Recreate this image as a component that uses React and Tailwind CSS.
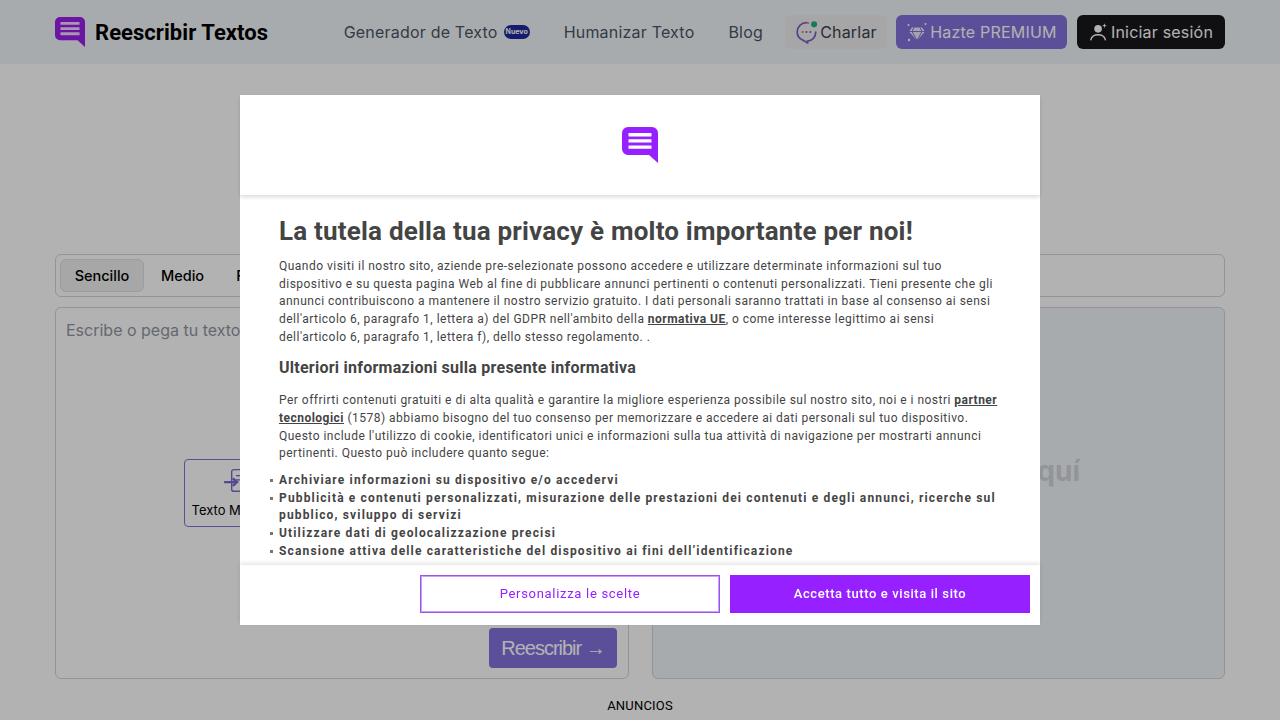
const Logo = ({ className, fill, bar }) => (
  <svg viewBox="0 0 36 36" className={className}>
    <path d="M6 0H30A6 6 0 0 1 36 6V36L27 28H6A6 6 0 0 1 0 22V6A6 6 0 0 1 6 0Z" fill={fill} />
    <rect x="6.5" y="6" width="23" height="3.4" rx="0.6" fill={bar} />
    <rect x="6.5" y="12.2" width="23" height="3.4" rx="0.6" fill={bar} />
    <rect x="6.5" y="18.4" width="23" height="3.4" rx="0.6" fill={bar} />
  </svg>
);

const ChatIcon = () => (
  <svg viewBox="0 0 22 22" className="w-[24px] h-[24px]">
    <path d="M10.5 2.5a8.5 8.5 0 0 0-8.5 8.5c0 3.6 2.2 6.2 5 7.4l4.5 2.6v-1.6c4.6-.4 7.5-4 7.5-8.4" fill="none" stroke="#7a5fc4" strokeWidth="1.6" strokeLinecap="round" />
    <path d="M10.5 2.5c.8 0 1.6.1 2.3.3" fill="none" stroke="#e56fb0" strokeWidth="1.6" />
    <circle cx="7" cy="11" r="1" fill="#e0609f" />
    <circle cx="10.5" cy="11" r="1" fill="#7a5fc4" />
    <circle cx="14" cy="11" r="1" fill="#7a5fc4" />
    <circle cx="17.5" cy="4" r="2.8" fill="#1fae8e" />
  </svg>
);

const DiamondIcon = () => (
  <svg viewBox="0 0 22 22" className="w-[22px] h-[22px]">
    <path d="M6 6.5h10l3 4-8 9-8-9z" fill="#fff" fillOpacity="0.85" />
    <path d="M3 10.5h16M8 6.5l-2 4 5 9 5-9-2-4" fill="none" stroke="#8372dd" strokeWidth="1" />
    <circle cx="2.5" cy="4" r="1" fill="#fff" />
    <circle cx="19.5" cy="3" r="1" fill="#fff" />
    <circle cx="3" cy="19" r="1.2" fill="#fff" />
  </svg>
);

const UserIcon = () => (
  <svg viewBox="0 0 22 22" className="w-[20px] h-[22px]">
    <circle cx="10" cy="7.5" r="4.2" fill="#fff" />
    <path d="M2 19.5c1-4 4-5.5 8-5.5s7 1.5 8 5.5" fill="none" stroke="#fff" strokeWidth="1.5" strokeLinecap="round" />
    <path d="M17 2v4M15 4h4" stroke="#fff" strokeWidth="1" />
  </svg>
);

const Sample = ({ label }) => (
  <div className="w-[104px] h-[68px] rounded border border-[#7f73d8] flex flex-col items-center justify-end pb-[6px] gap-[7px] text-[13px] text-black">
    <svg viewBox="0 0 24 24" className="w-[26px] h-[26px]" fill="none" stroke="#7a68d0" strokeWidth="1.3">
      <rect x="8" y="1.5" width="15" height="20" rx="2" />
      <path d="M12 7h8M12 11h8" />
      <path d="M1 13h12M9 9.5l4 3.5-4 3.5" strokeWidth="2.2" />
    </svg>
    <span className="whitespace-nowrap">{label}</span>
  </div>
);

const bullets = [
  "Archiviare informazioni su dispositivo e/o accedervi",
  "Pubblicità e contenuti personalizzati, misurazione delle prestazioni dei contenuti e degli annunci, ricerche sul pubblico, sviluppo di servizi",
  "Utilizzare dati di geolocalizzazione precisi",
  "Scansione attiva delle caratteristiche del dispositivo ai fini dell’identificazione",
];

export default function App() {
  return (
    <div className="h-[720px] overflow-hidden bg-white font-['Inter',sans-serif]">
      <header className="h-[64px] bg-[#f1f5f9] px-[55px] flex items-center justify-between">
        <div className="flex items-center gap-[10px]">
          <Logo className="w-[30px] h-[30px]" fill="#9b1fe8" bar="#f0d8ff" />
          <span className="font-['Roboto',sans-serif] font-bold text-[22px] tracking-[0.05px] text-black">Reescribir Textos</span>
        </div>
        <nav className="flex items-center text-[16px] tracking-[0.2px] text-[#4b5563]">
          <span className="flex items-center gap-[6px]">
            Generador de Texto
            <span className="w-[26px] h-[14px] rounded-full bg-[#1e2a9c] text-white text-[7px] tracking-normal font-bold flex items-center justify-center">Nuevo</span>
          </span>
          <span className="ml-[34px]">Humanizar Texto</span>
          <span className="ml-[34px]">Blog</span>
          <span className="ml-[22px] w-[102px] h-[34px] rounded-md bg-[#eeeeee] flex items-center justify-center gap-[1px] text-[#374151]"><ChatIcon />Charlar</span>
          <span className="ml-[9px] w-[171px] h-[34px] rounded-md bg-[#8372dd] flex items-center justify-center gap-[2px] text-white"><DiamondIcon />Hazte PREMIUM</span>
          <span className="ml-[10px] w-[148px] h-[34px] rounded-md bg-[#18181b] flex items-center justify-center gap-[2px] text-white"><UserIcon />Iniciar sesión</span>
        </nav>
      </header>

      <main className="px-[55px]">
        <div className="h-[190px] flex flex-col items-center justify-center pt-[40px]">
          <h1 className="text-[36px] font-bold text-black">Reescribir Textos</h1>
        </div>
        <div className="h-[43px] rounded-md border border-[#d1d5db] flex items-center px-[4px] text-[14.5px] text-black font-medium">
          <span className="h-[33px] w-[84px] rounded-md bg-[#efefef] border border-[#e0e0e0] flex items-center justify-center">Sencillo</span>
          <span className="ml-[17px]">Medio</span>
          <span className="ml-[32px]">Fuerte</span>
        </div>
        <div className="mt-[10px] h-[372px] grid grid-cols-[574px_573px] justify-between">
          <div className="rounded-md border border-[#d1d5db] flex flex-col pl-[10px] pr-[11px] pt-[10px] pb-[10px]">
            <p className="text-[16px] text-[#9097a0]">Escribe o pega tu texto aquí</p>
            <div className="mt-[117px] flex justify-center gap-[2px]">
              <Sample label="Texto Muestra" />
              <Sample label="Pegar Texto" />
              <Sample label="Subir Archivo" />
            </div>
            <div className="mt-auto flex justify-end">
              <span className="w-[128px] h-[40px] rounded bg-[#8372dd] text-white text-[20px] tracking-[-1px] font-['Liberation_Sans',sans-serif] flex items-center justify-center">Reescribir →</span>
            </div>
          </div>
          <div className="rounded-md border border-[#d1d5db] bg-[#f1f5f9] flex items-center justify-center pb-[44px] pl-[14px]">
            <p className="text-[28px] font-bold text-[#d1d5db]">Tu texto estará aquí</p>
          </div>
        </div>
        <p className="mt-[17px] text-center text-[13px] tracking-[0.2px] text-black font-['Roboto',sans-serif]">ANUNCIOS</p>
      </main>

      <div className="fixed inset-0 bg-black/30 flex items-center justify-center font-['Roboto',sans-serif]">
        <div className="w-[800px] h-[530px] bg-white flex flex-col">
          <div className="h-[100px] shrink-0 flex items-center justify-center shadow-[0_2px_4px_rgba(0,0,0,0.15)] relative">
            <Logo className="w-[36px] h-[36px]" fill="#9620ff" bar="#ffffff" />
          </div>
          <div className="flex-1 overflow-hidden pl-[39px] pr-[40px] pt-[21px] text-[#444444]">
            <h2 className="text-[26px] leading-[30px] font-bold tracking-[0.2px]">La tutela della tua privacy è molto importante per noi!</h2>
            <p className="mt-[12px] text-[12px] leading-[17.65px] tracking-[0.48px]">
              Quando visiti il nostro sito, aziende pre-selezionate possono accedere e utilizzare determinate informazioni sul tuo dispositivo e su questa pagina Web al fine di pubblicare annunci pertinenti o contenuti personalizzati. Tieni presente che gli annunci contribuiscono a mantenere il nostro servizio gratuito. I dati personali saranno trattati in base al consenso ai sensi dell'articolo 6, paragrafo 1, lettera a) del GDPR nell'ambito della <b className="underline">normativa UE</b>, o come interesse legittimo ai sensi dell'articolo 6, paragrafo 1, lettera f), dello stesso regolamento. .
            </p>
            <h3 className="mt-[12px] text-[16px] leading-[20px] font-bold tracking-[0.25px]">Ulteriori informazioni sulla presente informativa</h3>
            <p className="mt-[14px] text-[12px] leading-[17.65px] tracking-[0.48px]">
              Per offrirti contenuti gratuiti e di alta qualità e garantire la migliore esperienza possibile sul nostro sito, noi e i nostri <b className="underline">partner tecnologici</b> (1578) abbiamo bisogno del tuo consenso per memorizzare e accedere ai dati personali sul tuo dispositivo. Questo include l'utilizzo di cookie, identificatori unici e informazioni sulla tua attività di navigazione per mostrarti annunci pertinenti. Questo può includere quanto segue:
            </p>
            <ul className="mt-[9px] text-[12px] leading-[17.65px] font-bold tracking-[1.15px]">
              {bullets.map((b) => <li key={b} className="relative before:absolute before:left-[-9px] before:top-[7px] before:w-[3px] before:h-[3px] before:bg-[#777777]">{b}</li>)}
            </ul>
          </div>
          <div className="h-[60px] shrink-0 shadow-[0_-2px_4px_rgba(0,0,0,0.1)] relative flex justify-end gap-[10px] pt-[10px] pr-[10px] text-[13px] tracking-[0.6px]">
            <button className="w-[300px] h-[38px] border border-[#9a55e8] shadow-[inset_0_0_0_1px_#c9a0ff] text-[#9620ff] tracking-[0.7px]">Personalizza le scelte</button>
            <button className="w-[300px] h-[38px] bg-[#9620ff] text-white font-medium">Accetta tutto e visita il sito</button>
          </div>
        </div>
      </div>
    </div>
  );
}
